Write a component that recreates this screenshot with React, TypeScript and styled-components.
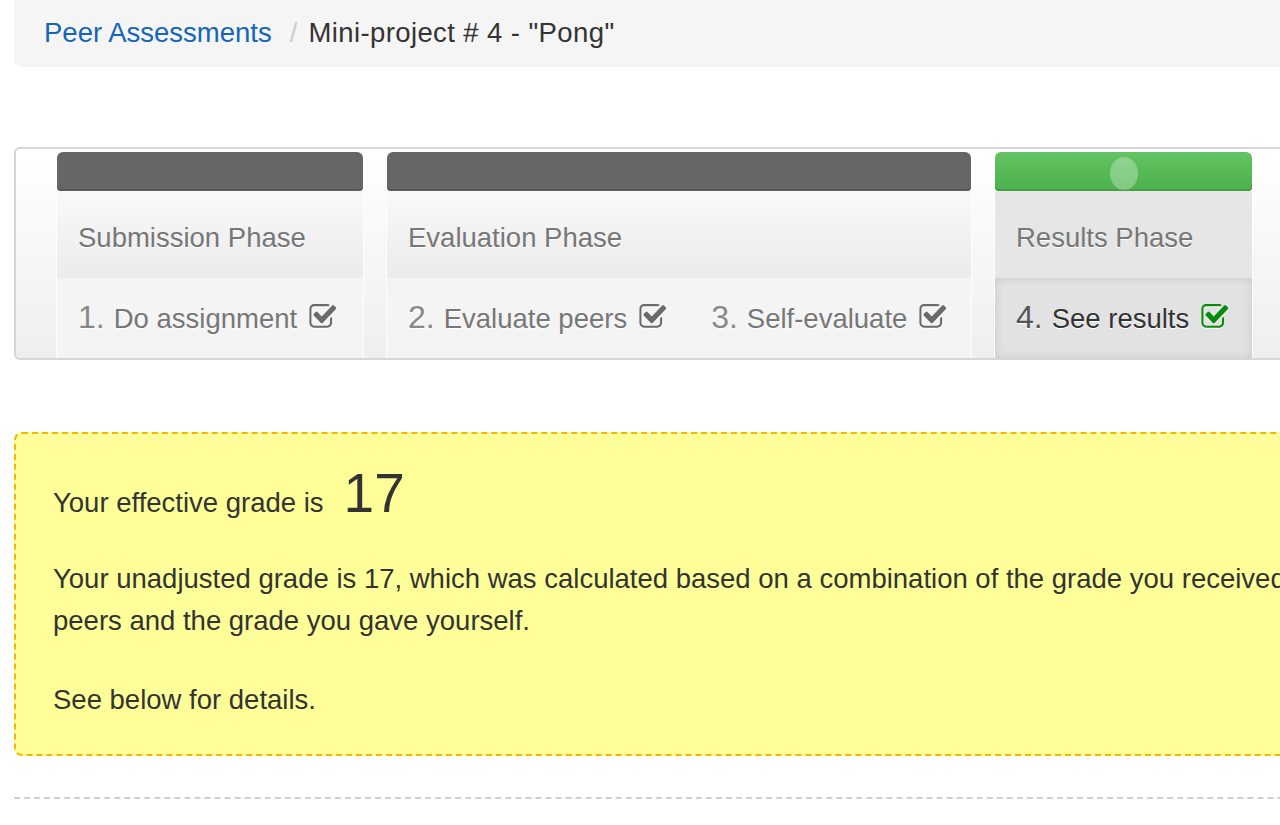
import styled, { createGlobalStyle } from 'styled-components';

const GlobalStyle = createGlobalStyle`
  html, body {
    margin: 0;
    padding: 0;
    background: #fff;
    overflow: hidden;
  }
  body {
    font-family: 'Liberation Sans', Arial, sans-serif;
    color: #333;
  }
`;

const Page = styled.div`
  width: 1440px;
  padding-left: 14px;
`;

const Breadcrumb = styled.div`
  display: flex;
  align-items: flex-start;
  height: 67px;
  box-sizing: border-box;
  padding: 19px 0 0 30px;
  background: #f5f5f5;
  border-radius: 0 0 0 8px;
  font-size: 27.5px;
  line-height: 1;
`;

const Crumb = styled.a`
  color: #1565b8;
  text-decoration: none;
`;

const Divider = styled.span`
  color: #ccc;
  padding: 0 11px 0 18px;
`;

const Current = styled.span`
  color: #333;
  letter-spacing: 0.4px;
`;

const PhaseBox = styled.div`
  display: flex;
  gap: 24px;
  margin-top: 80px;
  padding: 3px 0 0 41px;
  border: 2px solid #d6d6d6;
  border-right: none;
  border-radius: 6px 0 0 6px;
  background: linear-gradient(#ffffff, #eeeeee);
`;

const Column = styled.div<{ $width: number }>`
  display: flex;
  flex-direction: column;
  width: ${(p) => p.$width}px;
  flex: none;
  border-left: 1px solid rgba(255, 255, 255, 0.9);
  border-right: 1px solid rgba(255, 255, 255, 0.9);
  margin: 0 -1px;
`;

const Bar = styled.div<{ $done?: boolean }>`
  position: relative;
  height: 39px;
  border-radius: 6px 6px 4px 4px;
  background: ${(p) => (p.$done ? 'linear-gradient(#62c462, #4cb04c)' : '#666')};
  box-shadow: inset 0 -2px 0 ${(p) => (p.$done ? '#44a044' : '#5a5a5a')};
`;

const Knob = styled.span`
  position: absolute;
  left: 50%;
  top: 5px;
  width: 28px;
  height: 33px;
  margin-left: -14px;
  border-radius: 50%;
  background: rgba(255, 255, 255, 0.3);
`;

const PhaseHead = styled.div<{ $active?: boolean }>`
  height: 87px;
  box-sizing: border-box;
  padding: 33px 0 0 21px;
  font-size: 27.5px;
  line-height: 1;
  color: #777;
  text-shadow: 0 1px 0 #fff;
  background: ${(p) => (p.$active ? '#e6e6e6' : 'linear-gradient(#f9f9f9, #ebebeb)')};
`;

const Steps = styled.div<{ $active?: boolean }>`
  display: flex;
  height: 80px;
  box-sizing: border-box;
  padding-top: 23px;
  background: ${(p) => (p.$active ? '#e2e2e2' : '#f4f4f4')};
  box-shadow: ${(p) => (p.$active ? 'inset 0 0 8px rgba(0, 0, 0, 0.12)' : 'none')};
`;

const Step = styled.div`
  display: flex;
  align-items: baseline;
  padding: 0 23px 0 21px;
  line-height: 1;
  white-space: nowrap;
`;

const Num = styled.span<{ $active?: boolean }>`
  font-size: 32px;
  color: ${(p) => (p.$active ? '#555' : '#888')};
  text-shadow: 0 1px 0 #fff;
  margin-right: 9px;
`;

const Label = styled.span<{ $active?: boolean }>`
  font-size: 27.5px;
  color: ${(p) => (p.$active ? '#333' : '#777')};
  text-shadow: 0 1px 0 #fff;
`;

const CheckIcon = styled.svg<{ $active?: boolean }>`
  width: 28px;
  height: 24px;
  margin-left: 12px;
  flex: none;
  fill: ${(p) => (p.$active ? '#0a8a0a' : '#6a6a6a')};
  filter: drop-shadow(0 1px 0 #fff);
`;

const GradeBox = styled.div`
  margin-top: 72px;
  padding: 32px 0 33px 37px;
  background: #ffff99;
  border: 2px dashed #f5b800;
  border-right: none;
  border-radius: 8px 0 0 8px;
`;

const GradeLine = styled.div`
  display: flex;
  align-items: baseline;
  gap: 20px;
  line-height: 1;
`;

const GradeText = styled.span`
  font-size: 27.5px;
`;

const GradeValue = styled.span`
  font-size: 55px;
`;

const Para = styled.p`
  margin: 37px 0 0;
  font-size: 27.5px;
  line-height: 42px;
  color: #333;
  white-space: nowrap;
`;

const Rule = styled.hr`
  margin: 41px 0 0;
  border: none;
  border-top: 2px dashed #d0d0d0;
`;

const checkPath =
  'M1472 930v318q0 119-84.5 203.5t-203.5 84.5h-832q-119 0-203.5-84.5t-84.5-203.5v-832q0-119 84.5-203.5t203.5-84.5h832q63 0 117 25 15 7 18 23 3 17-9 29l-49 49q-10 10-23 10-3 0-9-2-23-6-45-6h-832q-66 0-113 47t-47 113v832q0 66 47 113t113 47h832q66 0 113-47t47-113v-254q0-13 9-22l64-64q10-10 23-10 6 0 12 3 20 8 20 29zm231-489l-814 814q-24 24-57 24t-57-24l-430-430q-24-24-24-57t24-57l110-110q24-24 57-24t57 24l263 263 647-647q24-24 57-24t57 24l110 110q24 24 24 57t-24 57z';

const Check = ({ active }: { active?: boolean }) => (
  <CheckIcon $active={active} viewBox="40 128 1740 1420" preserveAspectRatio="none">
    <path d={checkPath} />
  </CheckIcon>
);

const phases = [
  {
    title: 'Submission Phase',
    width: 306,
    steps: [{ n: '1.', label: 'Do assignment' }],
  },
  {
    title: 'Evaluation Phase',
    width: 584,
    steps: [
      { n: '2.', label: 'Evaluate peers' },
      { n: '3.', label: 'Self-evaluate' },
    ],
  },
  {
    title: 'Results Phase',
    width: 257,
    active: true,
    steps: [{ n: '4.', label: 'See results' }],
  },
];

export default function App() {
  return (
    <>
      <GlobalStyle />
      <Page>
        <Breadcrumb>
          <Crumb href="#">Peer Assessments</Crumb>
          <Divider>/</Divider>
          <Current>Mini-project # 4 - "Pong"</Current>
        </Breadcrumb>

        <PhaseBox>
          {phases.map((phase) => (
            <Column key={phase.title} $width={phase.width}>
              <Bar $done={phase.active}>{phase.active && <Knob />}</Bar>
              <PhaseHead $active={phase.active}>{phase.title}</PhaseHead>
              <Steps $active={phase.active}>
                {phase.steps.map((s) => (
                  <Step key={s.n}>
                    <Num $active={phase.active}>{s.n}</Num>
                    <Label $active={phase.active}>{s.label}</Label>
                    <Check active={phase.active} />
                  </Step>
                ))}
              </Steps>
            </Column>
          ))}
        </PhaseBox>

        <GradeBox>
          <GradeLine>
            <GradeText>Your effective grade is</GradeText>
            <GradeValue>17</GradeValue>
          </GradeLine>
          <Para>
            Your unadjusted grade is 17, which was calculated based on a combination of the grade you received from your
            <br />
            peers and the grade you gave yourself.
          </Para>
          <Para>See below for details.</Para>
        </GradeBox>

        <Rule />
      </Page>
    </>
  );
}
